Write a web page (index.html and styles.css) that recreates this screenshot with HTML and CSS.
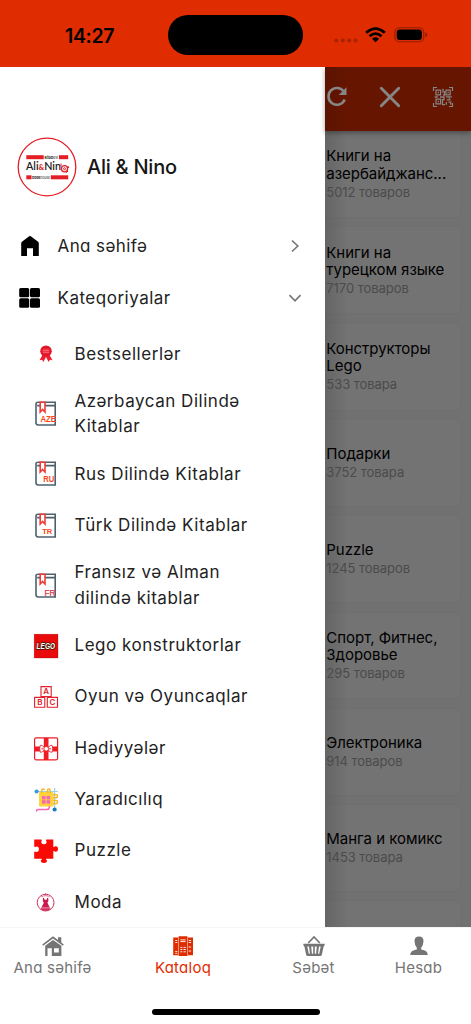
FILE: index.html
```html
<!DOCTYPE html>
<html lang="az">
<head>
<meta charset="utf-8">
<meta name="viewport" content="width=device-width">
<title>Ali &amp; Nino</title>
<link rel="stylesheet" href="styles.css">
</head>
<body>
<div class="screen">
  <header class="status">
    <div class="clock">14:27</div>
    <div class="island"></div>
    <div class="signals">
      <svg class="dots" width="24" height="5" viewBox="0 0 24 5" fill="#a82200"><circle cx="2.3" cy="2.5" r="2"/><circle cx="8.8" cy="2.5" r="2"/><circle cx="15.2" cy="2.5" r="2"/><circle cx="21.6" cy="2.5" r="2"/></svg>
      <svg class="wifi" width="21" height="16" viewBox="0 0 21 16" fill="none" stroke="#000" stroke-width="2.7"><path d="M1.2 5.8Q10.5-2.6 19.8 5.8M4.5 9.2Q10.5 3.9 16.5 9.2"/><path d="M7 11.7Q10.5 8.8 14 11.7L10.5 15.2Z" fill="#000" stroke="none"/></svg>
      <svg class="battery" width="34" height="16" viewBox="0 0 34 16"><rect x=".8" y=".8" width="29" height="14" rx="4.5" fill="none" stroke="#8f1d00" stroke-width="1.1"/><rect x="2.7" y="2.6" width="25.2" height="10.4" rx="3" fill="#000"/><path d="M31.3 5.5Q33.3 6 33.3 7.8T31.3 10.1Z" fill="#8f1d00"/></svg>
    </div>
  </header>

  <main class="stage">
    <aside class="drawer">
      <div class="brand">
        <svg width="60" height="60" viewBox="0 0 60 60">
          <circle cx="30" cy="30" r="28.8" fill="#fff" stroke="#e31e25" stroke-width="1.3"/>
          <g fill="#e31e25"><rect x="9.3" y="18.2" width="17.4" height="4"/><rect x="42" y="18.2" width="9.2" height="4"/><rect x="9.3" y="38.3" width="5.2" height="4"/><rect x="33.8" y="38.3" width="17.4" height="4"/></g>
          <text x="27.5" y="21.7" class="logo-tiny" textLength="13.5" lengthAdjust="spacingAndGlyphs"><tspan font-weight="700">kitab</tspan>evi</text>
          <text x="15" y="41.8" class="logo-tiny" textLength="18" lengthAdjust="spacingAndGlyphs"><tspan font-weight="700">book</tspan>house</text>
          <text x="9" y="32.7" class="logo-word" textLength="35" lengthAdjust="spacingAndGlyphs">Ali<tspan class="logo-amp">&amp;</tspan>Nin</text>
          <g fill="none" stroke="#e31e25"><circle cx="47.5" cy="31.7" r="3.1" stroke-width="1.3"/><circle cx="47.5" cy="31.7" r="1" stroke-width="1"/><path d="M44 29v-2.5M49 35.6l2-1.5M51 29l.7 2" stroke-width="1"/></g>
        </svg>
        <span class="brand-name geo">Ali &amp; Nino</span>
      </div>
      <nav class="menu">
        <div class="item">
          <svg class="item-icon" width="22" height="22" viewBox="0 0 22 22"><path d="M2.2 21V8.2Q2.2 7.4 2.9 6.8L10.2 1.2Q11 .6 11.8 1.2L19.1 6.8Q19.8 7.4 19.8 8.2V21H14V13.3H8V21Z"/></svg>
          <span class="item-text geo home">Ana səhifə</span>
          <svg class="chev" width="14" height="14" viewBox="0 0 14 14"><path d="M4 1.5 9.8 7 4 12.5"/></svg>
        </div>
        <div class="item">
          <svg class="item-icon" width="22" height="22" viewBox="0 0 22 22"><rect x=".2" y="1" width="10" height="9.3" rx="1.5"/><rect x="11" y="1" width="10" height="9.3" rx="1.5"/><rect x=".2" y="11.200" width="10" height="9.5" rx="1.5"/><rect x="11" y="11.200" width="10" height="9.5" rx="1.5"/></svg>
          <span class="item-text cats">Kateqoriyalar</span>
          <svg class="chev" width="14" height="14" viewBox="0 0 14 14"><path d="M1.5 4.2 7 9.8 12.5 4.2"/></svg>
        </div>
      </nav>
      <svg width="0" height="0" class="defs">
        <symbol id="book" viewBox="0 0 26 26">
          <path d="M4.700 1.200H23M4.200 4.600H22.200V24H5.200Q3 24 3 21.800V3Q3 1.200 4.800 1.200M22.200 1.200V4.600" fill="none" stroke="#4b626e" stroke-width="1.600"/>
          <path d="M7.200 1.200H12V11L9.600 8.500 7.200 11Z" fill="#fff" stroke="#ef3d36" stroke-width="1.600"/>
        </symbol>
      </svg>
      <ul class="cat-list">
        <li><svg width="26" height="26" viewBox="0 0 26 26"><g fill="#ee1c2e"><circle cx="13" cy="10.2" r="5.8"/><path d="m9.500 14-3 5.200 2.600-.4 1.300 2.200 2.600-5 2.600 5 1.300-2.200 2.600.4-3-5.200Z"/></g><circle cx="13" cy="10.2" r="4.100" fill="none" stroke="#a51525" stroke-width=".5"/><path d="M9.800 9.200h6.400M9.800 11.200h6.400" stroke="#ff9ea5" stroke-width=".7"/></svg><span>Bestsellerlər</span></li>
        <li><svg width="26" height="26" viewBox="0 0 26 26"><use href="#book"/><text x="7.500" y="20.500" class="code" textLength="15.500" lengthAdjust="spacingAndGlyphs">AZE</text></svg><span>Azərbaycan Dilində<br>Kitablar</span></li>
        <li><svg width="26" height="26" viewBox="0 0 26 26"><use href="#book"/><text x="10.300" y="20.500" class="code" textLength="11" lengthAdjust="spacingAndGlyphs">RU</text></svg><span>Rus Dilində Kitablar</span></li>
        <li><svg width="26" height="26" viewBox="0 0 26 26"><use href="#book"/><text x="9.200" y="20.500" class="code small" textLength="10" lengthAdjust="spacingAndGlyphs">TR</text></svg><span>Türk Dilində Kitablar</span></li>
        <li><svg width="26" height="26" viewBox="0 0 26 26"><use href="#book"/><text x="11.400" y="22.500" class="code pink" textLength="11" lengthAdjust="spacingAndGlyphs">FR</text></svg><span>Fransız və Alman<br>dilində kitablar</span></li>
        <li><svg width="26" height="26" viewBox="0 0 26 26"><rect x="1.200" y="1.200" width="23.800" height="23.800" fill="#e90b0b"/><path d="M1.400 1.400h23.400v23.400H1.400Z" fill="none" stroke="#b30e0e" stroke-width=".5"/><text x="3.600" y="16.400" class="lego" textLength="18.500" lengthAdjust="spacingAndGlyphs">LEGO</text></svg><span>Lego konstruktorlar</span></li>
        <li><svg width="26" height="26" viewBox="0 0 26 26"><g fill="#fff" stroke="#e3202c" stroke-width="1.100"><path d="M8 2.600H18.200V12.500H8ZM1.600 13.400H11.800V23.200H1.600ZM14.300 13.400H24.500V23.200H14.300Z"/></g><g class="block"><text x="13.100" y="10.400">A</text><text x="6.800" y="21.100">B</text><text x="19.400" y="21.100">C</text></g></svg><span>Oyun və Oyuncaqlar</span></li>
        <li><svg width="26" height="26" viewBox="0 0 26 26"><rect x="1.600" y="1.800" width="23" height="22" rx="1.500" fill="#fff" stroke="#ed1c24" stroke-width="1.200"/><path d="M10.800 2h4.700v22h-4.700ZM2 10.500h22.500v5H2Z" fill="#ed1c24"/><g fill="#fff" stroke="#ed1c24" stroke-width=".8"><path d="M12 12.700Q9 8 7.300 9.300 6 12.700 7.400 16.300 9 17.500 12 12.700ZM14.400 12.700Q17.400 8 19.100 9.300 20.400 12.700 19 16.300 17.400 17.500 14.400 12.700Z"/><circle cx="13.200" cy="12.800" r="2.300"/></g><path d="M8.300 12.800h2M16 12.800h2" stroke="#ed1c24"/></svg><span>Hədiyyələr</span></li>
        <li><svg width="26" height="26" viewBox="0 0 26 26"><path d="M21.600 1v20M4 4.500h21" stroke="#9bd2e8" stroke-width="1.200"/><rect x="6" y="5" width="14.500" height="14.500" rx="1" fill="#ffd43b"/><g fill="none" stroke="#f5b62b" stroke-width="1.500"><path d="M8.700 6V3.200Q8.700 1.900 10 1.900T11.300 3.200M14.500 6V3.200Q14.500 1.900 15.800 1.900T17.100 3.200V6M20 7.700h3.200q1.300 0 1.300 1.500t-1.300 1.500H20M20 13.500h3.200q1.300 0 1.300 1.500T23.200 16.500H20"/></g><g fill="#f468b5"><rect x="9" y="9" width="3.600" height="3.400"/><rect x="13.500" y="9" width="3.600" height="3.400"/><rect x="9" y="13.200" width="3.600" height="3.400"/><rect x="13.500" y="13.200" width="3.600" height="3.400"/></g><path d="M4 24.500Q2.800 22.500 5.500 22.500H14Q16.500 22.500 16.500 19" fill="none" stroke="#f468b5" stroke-width="1.500"/><circle cx="3.600" cy="4.500" r="2.100" fill="#389dd8"/><circle cx="21.600" cy="22.500" r="2.100" fill="#187bbd"/></svg><span>Yaradıcılıq</span></li>
        <li><svg width="26" height="26" viewBox="0 0 26 26"><path fill="#fa0a05" d="M1.200 1.600H8.400Q9.200 2.400 8.400 3.600 8 6.200 11 6.200T13.500 3.600Q12.500 2.400 13.400 1.600H20.300V8.700Q21 9.500 22.200 8.300 25 7.800 25 11T22.200 13.700Q21 12.600 20.300 13.300V20.700H13.200Q12.600 21.300 14 22.500 14 25 10.900 25T7.800 22.500Q9.400 21.300 8.600 20.700H1.200V13.900Q2 12.900 3.200 14 6 13.900 6 11.100T3.200 8.400Q2 9.500 1.200 8.500Z"/></svg><span>Puzzle</span></li>
        <li><svg width="26" height="26" viewBox="0 0 26 26"><circle cx="12.600" cy="12.600" r="8.400" fill="#fff" stroke="#d43361" stroke-width="1"/><path d="M11 7.900 11.500 9.800h2.200l.5-1.900 1 .1.200 3-1 1.800 3.300 6.800q-5.100 2.100-10.200 0l3.300-6.800-1-1.800.2-3Z" fill="#c9184c"/><path d="M8.500 17.400h8.200M8 18.800h9" stroke="#f2a8be" stroke-width=".6"/><path d="M8.500 6.900q4-2.400 8.200 0M12.600 3.400v2" fill="none" stroke="#d43361" stroke-dasharray="1.400 .6"/></svg><span>Moda</span></li>
      </ul>
    </aside>

    <section class="catalog">
      <div class="toolbar">
        <svg width="22" height="22" viewBox="0 0 22 22"><path d="M17.600 5.300A8.400 8.400 0 1 0 18.700 13.500" fill="none" stroke="#868686" stroke-width="2.600"/><path d="M20.500 1.200V9H12.700Z" fill="#868686"/></svg>
        <svg width="22" height="22" viewBox="0 0 22 22"><path d="M2.300 2.300 19.700 19.700M19.700 2.300 2.300 19.700" stroke="#868686" stroke-width="2.900" stroke-linecap="round"/></svg>
        <svg width="22" height="22" viewBox="0 0 22 22" fill="none" stroke="#868686" stroke-width="1.200"><path d="M1.500 5V1.500H5M17 1.500h3.500V5M1.500 17v3.500H5M17 20.500h3.500V17"/><path d="M4 4.200h4.600v4.600H4ZM14 4.200h4.200v4.600H14ZM4 13.200h4.600v4.600H4Z"/><path d="M5.800 6.500h1.200M15.600 6.500h1.200M5.800 15.500h1.200M11 2.800v4M11 9h1.600V5M2.600 11h3.200M8 11h4v2.600h-1.500v5H13M14 10.800h3.300v2M14.700 13.800h4M14.300 16v2.800M16.500 16.200h2.200v2.500M19 10v1.800" stroke-width="1.300"/></svg>
      </div>
      <div class="cards">
        <article><h3>Книги на<br>азербайджанс...</h3><p>5012 товаров</p></article>
        <article><h3>Книги на<br>турецком языке</h3><p>7170 товаров</p></article>
        <article><h3>Конструкторы<br>Lego</h3><p>533 товара</p></article>
        <article><h3>Подарки</h3><p>3752 товара</p></article>
        <article><h3>Puzzle</h3><p>1245 товаров</p></article>
        <article><h3>Спорт, Фитнес,<br>Здоровье</h3><p>295 товаров</p></article>
        <article><h3>Электроника</h3><p>914 товаров</p></article>
        <article><h3>Манга и комикс</h3><p>1453 товара</p></article>
        <article></article>
      </div>
    </section>
  </main>

  <footer class="tabs">
    <div class="tab-row geo">
      <div class="tab t1"><svg width="22" height="22" viewBox="0 0 22 22" fill="#757575"><path d="M11 1.300 16 5.100V2.200h3.300V7.600L21.800 9.600 20.900 10.800 11 3.500 1.100 10.800.2 9.600Z"/><path fill-rule="evenodd" d="M3.200 10.800 11 5.100l8.400 5.700V21H9.800V13.300H5.500V21H3.200ZM12 13.200v4.400h4.800v-4.400Z"/></svg><span>Ana səhifə</span></div>
      <div class="tab t2"><svg width="22" height="22" viewBox="0 0 22 22"><path fill="#df2c00" d="M1.200 2.600H6V20.300H1.200ZM6.500 1.200h9V21h-9ZM16 2.600h5V20.300H16Z"/><g stroke="#fff" stroke-width=".9"><path d="M8.400 4.900h5.200M8.400 6.600h5.200M8.400 12.400h2M11.500 12.400h2.300M8.400 14.500h2M11.500 14.500h2.300M8.400 16.800h2M11.500 16.800h2.300M3.300 5.500h2M3.300 7.500h2M3.300 16.500h2M3.300 18.300h2M16.700 5.500h2.400M16.700 7.500h2.400M16.700 12h2.400M16.700 16h2.400"/></g></svg><span>Kataloq</span></div>
      <div class="tab t3"><svg width="22" height="22" viewBox="0 0 22 22"><path d="M5.200 8 11 1.900 16.800 8" fill="none" stroke="#757575" stroke-width="1.700"/><path fill="#757575" fill-rule="evenodd" d="M.5 8.700h21q.6 1.800-.9 2.700L18.800 20q-.3 1-1.500 1H4.700q-1.200 0-1.500-1L1.400 11.400Q-.1 10.500.5 8.700ZM4.300 11.500 5.800 18.800H7L6 11.500ZM8.200 11.500 8.900 18.800h1.300V11.500ZM11.800 11.500v7.300h1.300l.7-7.300ZM16 11.500 15 18.800h1.200l1.500-7.300Z"/></svg><span>Səbət</span></div>
      <div class="tab t4"><svg width="22" height="22" viewBox="0 0 22 22" fill="#757575"><path d="M11 1.500Q15.700 1.500 15.500 6.200 15.300 10.500 13.200 12.700V14.400Q19.800 15.200 19.800 20H2.200Q2.200 15.200 8.800 14.400V12.700Q6.700 10.500 6.500 6.200 6.300 1.500 11 1.500Z"/></svg><span>Hesab</span></div>
    </div>
    <div class="home-bar"></div>
  </footer>
</div>
</body>
</html>
```
FILE: styles.css
```css
* { box-sizing: border-box; }
body { margin: 0; background: #fff; font-family: Inter, "Noto Sans", sans-serif; }
svg { display: block; flex: none; }
.screen { width: 471px; height: 1024px; display: flex; flex-direction: column; overflow: hidden; }
.geo { font-feature-settings: "cv11" 1; }

.status { flex: none; height: 66.6px; background: #df2c00; display: flex; padding-top: 15px; }
.clock { width: 168px; padding: 6px 0 0 65px; font-size: 19.5px; font-weight: 600; line-height: 30px; letter-spacing: -.35px; }
.island { width: 135px; height: 39.5px; border-radius: 20px; background: #000; }
.signals { display: flex; padding: 12px 0 0 30.5px; }
.dots { margin-top: 10.5px; }
.wifi { margin-left: 7.5px; }
.battery { margin-left: 8px; }

.stage { flex: 1; min-height: 0; display: flex; overflow: hidden; }
.drawer { width: 325.3px; flex: none; background: #fff; overflow: hidden; }
.brand { height: 153px; padding: 70px 0 0 17px; display: flex; align-items: flex-start; gap: 10px; }
.brand-name { font-size: 20px; font-weight: 500; line-height: 60px; letter-spacing: -.25px; color: #161616; }
.logo-tiny { font: 4px Inter, sans-serif; fill: #222; }
.logo-word { font: 600 11px Lato, sans-serif; fill: #202020; }
.logo-amp { font-size: 8px; font-weight: 900; fill: #e31e25; }
.menu { padding: 0 23px 0 18.5px; }
.item { height: 52.5px; display: flex; align-items: center; }
.item-icon { fill: #000; }
.item-text { flex: 1; padding-left: 17px; font-size: 17px; color: #222; }
.home { letter-spacing: .4px; }
.cats { letter-spacing: .5px; }
.chev { fill: none; stroke: #777; stroke-width: 1.7; }

.defs { position: absolute; }
.cat-list { list-style: none; margin: 4.2px 0 0; padding: 0; }
.cat-list li { display: flex; align-items: center; gap: 15.5px; padding: 0 0 0 33px; min-height: 51.35px; }
.cat-list li:has(br) { height: 68.7px; }
.cat-list span { font-size: 17px; line-height: 25.5px; letter-spacing: .53px; color: #222; }
.code { font: 700 8.5px "Liberation Sans", sans-serif; fill: #fa4616; }
.code.small { font-size: 7.5px; }
.code.pink { font-weight: 400; font-size: 8.5px; fill: #e02b45; stroke: #e02b45; stroke-width: .2px; }
.lego { font: italic 900 9.5px "Liberation Sans", sans-serif; fill: #fff; stroke: #3a1a05; stroke-width: 1.6px; stroke-linejoin: round; paint-order: stroke; }
.block { font: 600 8px Inter, sans-serif; fill: #e3202c; text-anchor: middle; }

.catalog { flex: 1; display: flex; flex-direction: column; background: linear-gradient(90deg, #646464, #717171 22px); }
.toolbar { position: relative; flex: none; height: 64px; padding: 0 16.5px 4px 1px; display: flex; align-items: center; justify-content: space-between; background: linear-gradient(90deg, #5b1300, #661500 22px); box-shadow: 0 2px 5px rgba(0, 0, 0, .35); }
.cards { display: flex; flex-direction: column; gap: 10.4px; padding: .5px 11px 0 0; }
.cards article { height: 85.9px; flex: none; padding-left: 1px; display: flex; flex-direction: column; justify-content: center; background: linear-gradient(90deg, #656565, #737373 22px); border-radius: 0 5px 5px 0; box-shadow: 0 0 5px rgba(0, 0, 0, .02); }
.cards h3 { margin: 0; font-size: 15px; font-weight: 400; line-height: 17.2px; letter-spacing: -.03px; color: #000; white-space: nowrap; }
.cards p { margin: 2px 0 0; font-size: 13px; line-height: 17px; letter-spacing: -.05px; color: #4b4b4b; }

.tabs { flex: none; height: 97.3px; background: #fff; display: flex; flex-direction: column; align-items: center; justify-content: space-between; border-top: 1px solid #f5f5f5; padding: 7px 0 9px; }
.tab-row { width: 471px; display: flex; }
.tab { display: flex; flex-direction: column; align-items: center; font-size: 15px; line-height: 19px; gap: 1px; letter-spacing: .25px; color: #757575; }
.t1 { width: 105px; }
.t2 { width: 156px; color: #df2c00; }
.t3 { width: 105px; }
.t4 { width: 105px; }
.home-bar { width: 168px; height: 6px; border-radius: 3px; background: #000; }
```
